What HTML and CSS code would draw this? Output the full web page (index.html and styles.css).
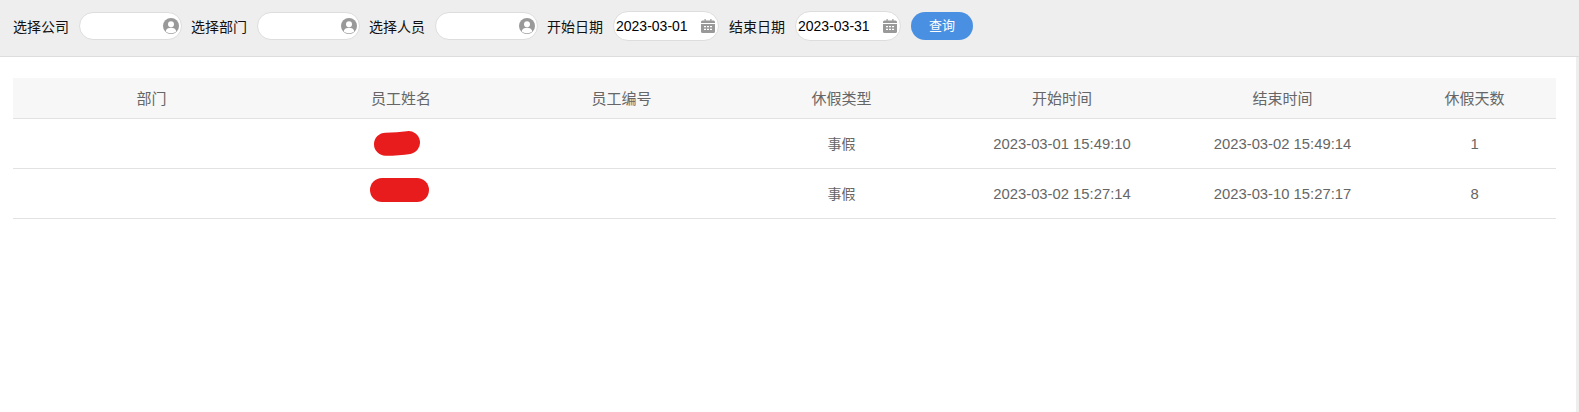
FILE: index.html
```html
<!DOCTYPE html>
<html lang="zh">
<head>
<meta charset="utf-8">
<title>休假查询</title>
<link rel="stylesheet" href="styles.css">
</head>
<body>
<div class="page">
  <form class="toolbar">
    <label class="lbl">选择公司</label>
    <div class="field person"><svg class="ico" viewBox="0 0 16 16"><circle cx="8" cy="8" r="8" fill="#999"/><circle cx="8" cy="6.2" r="3" fill="#fff"/><path d="M2.6 13.400c.6-2.600 2.800-3.700 5.400-3.700s4.800 1.100 5.400 3.700A8 8 0 0 1 8 15.200a8 8 0 0 1-5.400-1.800z" fill="#fff"/></svg></div>
    <label class="lbl">选择部门</label>
    <div class="field person"><svg class="ico" viewBox="0 0 16 16"><circle cx="8" cy="8" r="8" fill="#999"/><circle cx="8" cy="6.2" r="3" fill="#fff"/><path d="M2.6 13.400c.6-2.600 2.800-3.700 5.400-3.700s4.800 1.100 5.400 3.700A8 8 0 0 1 8 15.200a8 8 0 0 1-5.400-1.800z" fill="#fff"/></svg></div>
    <label class="lbl">选择人员</label>
    <div class="field person"><svg class="ico" viewBox="0 0 16 16"><circle cx="8" cy="8" r="8" fill="#999"/><circle cx="8" cy="6.2" r="3" fill="#fff"/><path d="M2.6 13.400c.6-2.600 2.800-3.700 5.400-3.700s4.800 1.100 5.400 3.700A8 8 0 0 1 8 15.200a8 8 0 0 1-5.400-1.800z" fill="#fff"/></svg></div>
    <label class="lbl">开始日期</label>
    <div class="field date"><span class="val">2023-03-01</span><svg class="cal" viewBox="0 0 14 14"><path d="M1.500 1.500h2V0h1.200v1.500h4.600V0h1.200v1.500h2A1.500 1.500 0 0 1 14 3v1H0V3a1.500 1.500 0 0 1 1.500-1.500zM0 5h14v7.500a1.500 1.500 0 0 1-1.500 1.500h-11A1.500 1.500 0 0 1 0 12.500z" fill="#999"/><path d="M3 7h2v1.200H3zM6 7h2v1.200H6zM9 7h2v1.200H9zM3 9.800h2V11H3zM6 9.800h2V11H6zM9 9.800h2V11H9z" fill="#fff"/></svg></div>
    <label class="lbl">结束日期</label>
    <div class="field date"><span class="val">2023-03-31</span><svg class="cal" viewBox="0 0 14 14"><path d="M1.500 1.500h2V0h1.200v1.500h4.600V0h1.200v1.500h2A1.500 1.500 0 0 1 14 3v1H0V3a1.500 1.500 0 0 1 1.500-1.500zM0 5h14v7.500a1.500 1.500 0 0 1-1.500 1.500h-11A1.500 1.500 0 0 1 0 12.500z" fill="#999"/><path d="M3 7h2v1.200H3zM6 7h2v1.200H6zM9 7h2v1.200H9zM3 9.800h2V11H3zM6 9.800h2V11H6zM9 9.800h2V11H9z" fill="#fff"/></svg></div>
    <button class="btn" type="button">查询</button>
  </form>
  <main class="content">
    <table class="grid">
      <thead>
        <tr>
          <th class="c1">部门</th><th class="c2">员工姓名</th><th class="c3">员工编号</th><th class="c4">休假类型</th><th class="c5">开始时间</th><th class="c6">结束时间</th><th class="c7">休假天数</th>
        </tr>
      </thead>
      <tbody>
        <tr>
          <td></td>
          <td><svg class="redact r1" viewBox="0 0 48 25"><path d="M12.500 13.200C20 13.200 28 12.800 35.500 11.600" fill="none" stroke="#e81c1c" stroke-width="23" stroke-linecap="round"/></svg></td>
          <td></td><td class="cn">事假</td><td class="num">2023-03-01 15:49:10</td><td class="num">2023-03-02 15:49:14</td><td class="num">1</td>
        </tr>
        <tr>
          <td></td>
          <td><svg class="redact r2" viewBox="0 0 59 24"><path d="M12 12H47" fill="none" stroke="#e81c1c" stroke-width="24" stroke-linecap="round"/></svg></td>
          <td></td><td class="cn">事假</td><td class="num">2023-03-02 15:27:14</td><td class="num">2023-03-10 15:27:17</td><td class="num">8</td>
        </tr>
      </tbody>
    </table>
  </main>
</div>
</body>
</html>
```
FILE: styles.css
```css
* { box-sizing: border-box; }
html, body { margin: 0; height: 100%; }
body { background: #fff; font-family: "Liberation Sans", "Noto Sans CJK SC", sans-serif; overflow: hidden; }
.page { height: 412px; border-right: 3px solid #eeeeee; }
.toolbar {
  display: flex; align-items: center; height: 57px; width: 1579px;
  padding: 0 13px 4px; background: #eeeeee; border-bottom: 1px solid #dddddd;
}
.lbl { font-size: 14px; color: #111; line-height: 20px; width: 56px; white-space: nowrap; position: relative; top: 1px; }
.field {
  display: flex; align-items: center;
  background: #fff; border: 1px solid #dddddd; border-radius: 15px;
}
.person { width: 103px; height: 28px; margin: 0 9px 0 10px; padding-right: 2px; justify-content: flex-end; }
.date { width: 106px; height: 30px; margin: 0 10px 0 10px; padding: 0 3px 0 2px; justify-content: space-between; }
.ico { width: 16px; height: 16px; }
.cal { width: 14px; height: 14px; }
.val { font-size: 14px; color: #000; }
.btn {
  width: 62px; height: 28px; margin-left: 0; padding: 0 0 3px; border: 0; border-radius: 14px;
  background: #4a90e2; color: #fff; font: 13px "Liberation Sans", "Noto Sans CJK SC", sans-serif;
}
.content { padding: 21px 20px 0 13px; }
.grid { width: 1543px; table-layout: fixed; border-collapse: collapse; }
.grid th { height: 40px; background: #f7f7f7; font-weight: 400; font-size: 15px; color: #666; border-bottom: 1px solid #e2e2e2; padding: 0; }
.grid td { height: 50px; text-align: center; font-size: 14px; color: #666; border-bottom: 1px solid #e2e2e2; padding: 0; }
.grid td.num { font-size: 14.8px; padding-top: 2px; }
.c1 { width: 277px; } .c2 { width: 222px; } .c3 { width: 219px; } .c4 { width: 221px; }
.c5 { width: 220px; } .c6 { width: 221px; } .c7 { width: 163px; }
.redact { display: inline-block; vertical-align: middle; }
.r1 { width: 48px; height: 25px; margin-right: 8px; }
.r2 { width: 59px; height: 24px; margin: 0 4px 7px 0; }
```
